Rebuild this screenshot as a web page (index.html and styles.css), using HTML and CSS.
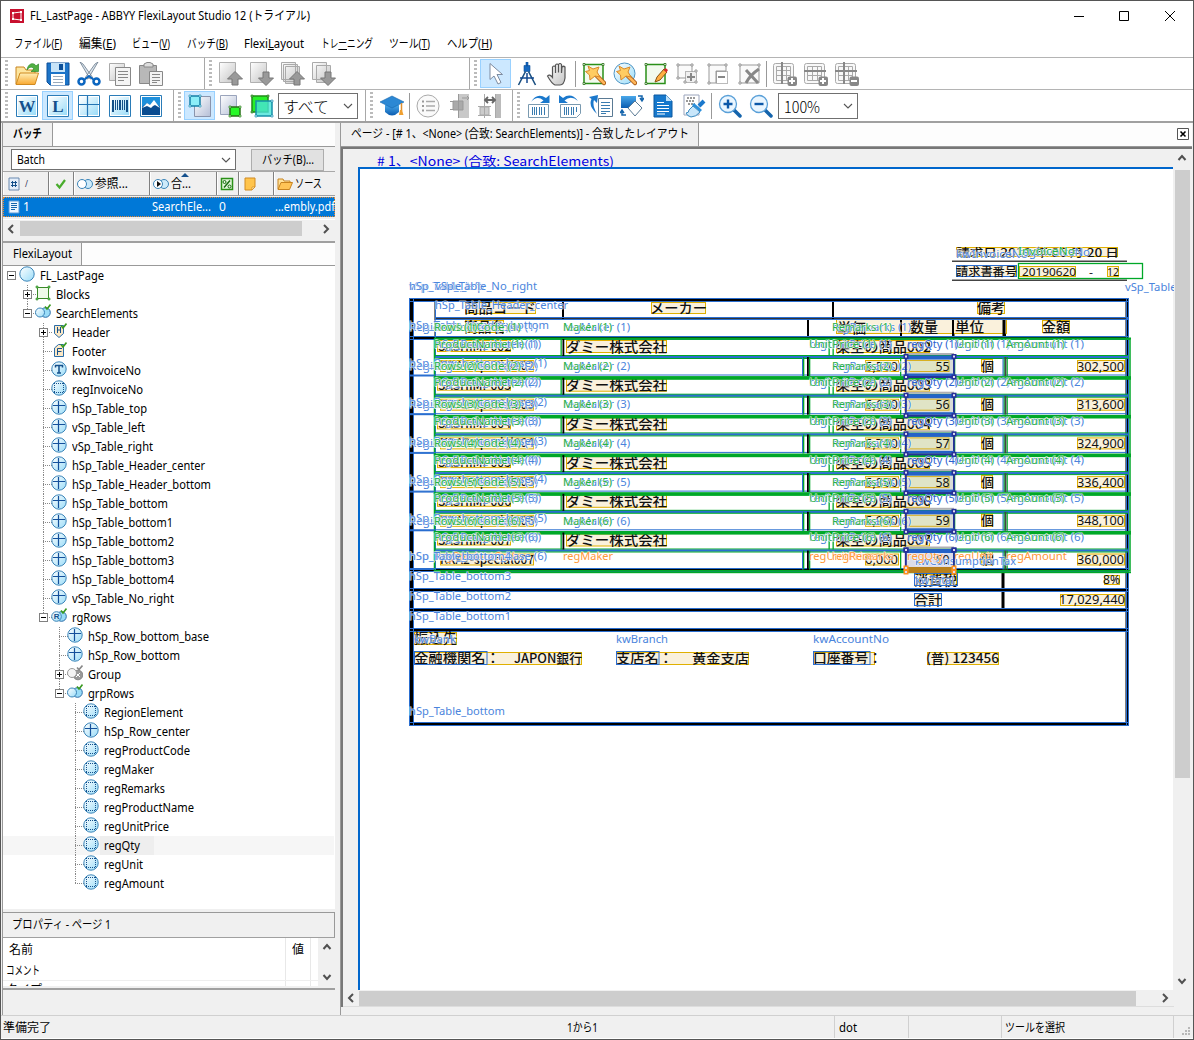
FILE: index.html
```html
<!DOCTYPE html>
<html lang="ja">
<head>
<meta charset="utf-8">
<title>FL_LastPage - ABBYY FlexiLayout Studio 12</title>
<link rel="stylesheet" href="styles.css">
</head>
<body>
<svg class="defs" width="0" height="0" aria-hidden="true">
  <defs>
    <linearGradient id="gBlue" x1="0" y1="0" x2="1" y2="1"><stop offset="0" stop-color="#fff"/><stop offset="1" stop-color="#9adcf8"/></linearGradient>
    <linearGradient id="gGray" x1="0" y1="0" x2="1" y2="1"><stop offset="0" stop-color="#fff"/><stop offset="1" stop-color="#c4c4c4"/></linearGradient>
    <linearGradient id="gSlate" x1="0" y1="0" x2="1" y2="1"><stop offset="0" stop-color="#fff"/><stop offset="1" stop-color="#b4bed6"/></linearGradient>
    <linearGradient id="gFold" x1="0" y1="0" x2="0" y2="1"><stop offset="0" stop-color="#fff0b8"/><stop offset="1" stop-color="#f8a830"/></linearGradient>
    <linearGradient id="gDeep" x1="0" y1="0" x2="0" y2="1"><stop offset="0" stop-color="#4aa8ea"/><stop offset="1" stop-color="#0a5cb0"/></linearGradient>
    <symbol id="open" viewBox="0 0 24 24"><path d="M1 22V5h8l2 3h9v4" fill="#fde6a0" stroke="#c88420"/><path d="M1 22.500 5 11h18.500L20 22.500z" fill="url(#gFold)" stroke="#d08a20"/><path d="M12 8C13 1 19 0 21 4l2.500-2v7.500H16l3-2.500C17 4 14 5 12 8z" fill="#52b043" stroke="#2d8a28" stroke-width=".7"/></symbol>
    <symbol id="save" viewBox="0 0 24 24"><path d="M1 1h22v22H4l-3-3z" fill="#1c74c8" stroke="#0c4f98"/><path d="M5 1h14v9H5z" fill="#c8e4f8"/><path d="M13 2h4v6h-4z" fill="#0c4f98"/><path d="M5 12h14v11H5z" fill="#fff"/><path d="M7 14.500h10M7 17.500h10M7 20.500h10" stroke="#9ab"/></symbol>
    <symbol id="cut" viewBox="0 0 24 24"><path d="m3 0 3 2 10 14-3 1zM21 0l-3 2L8 16l3 1z" fill="#dce6ee" stroke="#68788a" stroke-width=".8"/><circle cx="4.500" cy="19.500" r="3" fill="none" stroke="#0c66c0" stroke-width="2.500"/><circle cx="19.500" cy="19.500" r="3" fill="none" stroke="#0c66c0" stroke-width="2.500"/><path d="m7 18 5-4 5 4" fill="none" stroke="#0c66c0" stroke-width="2"/></symbol>
    <symbol id="copy" viewBox="0 0 24 24"><path d="M1.500 1.500h15v17h-15z" fill="url(#gGray)" stroke="#aaa"/><path d="M7.500 5.500h15v18h-15z" fill="#f4f4f4" stroke="#888"/><path d="M10 9.500h10M10 12.500h10M10 15.500h10M10 18.500h6" stroke="#888"/></symbol>
    <symbol id="paste" viewBox="0 0 24 24"><path d="M.5 3.500h17v18H.5z" fill="#b8b8b8" stroke="#888"/><path d="M5 5V2l3-1.500h3L14 2v3z" fill="#ddd" stroke="#888"/><path d="M10.500 9.500h13v14h-13z" fill="#f4f4f4" stroke="#888"/><path d="M13 12.500h8M13 15.500h8M13 18.500h8M13 20.500h5" stroke="#888"/></symbol>
    <symbol id="pgup" viewBox="0 0 24 24"><path d="M.5.500h16v20H.5z" fill="url(#gGray)" stroke="#b0b0b0"/><path d="M16 9.500 23.500 17H19v6h-6v-6H8.500z" fill="#999" stroke="#777"/></symbol>
    <symbol id="pgdn" viewBox="0 0 24 24"><path d="M.5.500h16v20H.5z" fill="url(#gGray)" stroke="#b0b0b0"/><path d="M16 23.500 23.500 16H19v-6h-6v6H8.500z" fill="#999" stroke="#777"/></symbol>
    <symbol id="pgsup" viewBox="0 0 24 24"><path d="M.5.500h14v17H.5zM2.500 2.500h14v17h-14zM4.500 4.500h14v17h-14z" fill="url(#gGray)" stroke="#aaa"/><path d="M16 9.500 23.500 17H19v6h-6v-6H8.500z" fill="#999" stroke="#777"/></symbol>
    <symbol id="pgsdn" viewBox="0 0 24 24"><path d="M.5.500h14v17H.5zM4.500 3.500h14v17h-14z" fill="url(#gGray)" stroke="#aaa"/><path d="M16 23.500 23.500 16H19v-6h-6v6H8.500z" fill="#999" stroke="#777"/></symbol>
    <symbol id="arrow" viewBox="0 0 24 24"><path d="M6 1.500v16l4-3.500 4 8 3-1.500-4-8h5.500z" fill="#fff" stroke="#7d8ba0"/></symbol>
    <symbol id="compass" viewBox="0 0 24 24"><path d="M9 3.500h6v6H9zM11 0h2v4h-2z" fill="#1668c0" stroke="#0c4f98" stroke-width=".6"/><path d="M10.500 9.500 3.500 23M13.500 9.500l7 13.500" stroke="#1a4f80" stroke-width="1.600"/><path d="M5 16h14M12 11v10" fill="none" stroke="#144a90" stroke-width="1.500"/></symbol>
    <symbol id="hand" viewBox="0 0 24 24"><path d="M6.500 14V5q1.500-2 3 0v6-8q1.500-2 3 0v7.500-8q1.500-2 3 0V11l.5-6q1.500-1.500 3 0V16q-1 7-5 7h-5q-3-1-7.500-9 2-2.500 5 1.500z" fill="url(#gGray)" stroke="#555" stroke-width="1.200"/></symbol>
    <symbol id="wand" viewBox="0 0 24 24"><path d="m14 13 8 8" stroke="#a85c18" stroke-width="4.500" stroke-linecap="round"/><path d="m14 13 8 8" stroke="#ffb658" stroke-width="2.500" stroke-linecap="round"/><path d="m6 4 5 3 6-2-2 5 3 5-5-1-5 4-.5-5-4-3.500 4-1z" fill="#ffcc62" stroke="#d8882a"/></symbol>
    <symbol id="gframe" viewBox="0 0 24 24"><path d="M2 2.500h19v19H2z" fill="#f2faee" stroke="#2a9018" stroke-width="1.500"/><path d="M1 1.500h2v2H1zM20 1.500h2v2h-2zM1 20.500h2v2H1z" fill="#fff" stroke="#2a7018" stroke-width=".8"/></symbol>
    <symbol id="wandsq" viewBox="0 0 24 24"><use href="#gframe"/><use href="#wand"/></symbol>
    <symbol id="wandcir" viewBox="0 0 24 24"><circle cx="11.500" cy="11.500" r="10.500" fill="url(#gBlue)" stroke="#4c94c4"/><use href="#wand"/></symbol>
    <symbol id="pencil" viewBox="0 0 24 24"><use href="#gframe"/><path d="m11 20 2-5L20 7l3 3-7 8z" fill="#ffae42" stroke="#8a5210"/><path d="m19.500 8 2-2 2.500 2-1.500 2.500z" fill="#d42c2c"/></symbol>
    <symbol id="gray1" viewBox="0 0 24 24"><path d="M3 3h14v13H3z" fill="#fafafa" stroke="#999"/><path d="M10.500 9.500h11v11h-11z" fill="#f0f0f0" stroke="#777" stroke-dasharray="1 1"/><path d="M16 11v8M12 15h8" stroke="#888" stroke-width="2"/><path d="M2 2h2v2H2zM16 2h2v2h-2zM2 15h2v2H2zM20 8h2v2h-2zM20 19h2v2h-2zM9 19h2v2H9z" fill="#fff" stroke="#999"/></symbol>
    <symbol id="gray2" viewBox="0 0 24 24"><path d="M20 9V3H3v18h7V9z" fill="#fafafa" stroke="#999"/><path d="M10.500 9.500h11v12h-11z" fill="none" stroke="#777" stroke-dasharray="1 1"/><path d="M12 15h7" stroke="#888" stroke-width="2"/><path d="M2 2h2v2H2zM19 2h2v2h-2zM2 20h2v2H2z" fill="#fff" stroke="#999"/></symbol>
    <symbol id="gray3" viewBox="0 0 24 24"><path d="M3 3h19v18H3z" fill="#fafafa" stroke="#999"/><path d="m9 8 12 13M22 7Q13 13 9 21" stroke="#888" stroke-width="3" fill="none"/><path d="M2 2h2v2H2zM21 2h2v2h-2zM2 20h2v2H2z" fill="#fff" stroke="#999"/></symbol>
    <symbol id="grid" viewBox="0 0 24 24"><rect x=".5" y="1.500" width="20" height="20" rx="2" fill="#f8f8f8" stroke="#aaa"/><path d="M3.500 4.500h14v14h-14zM3.500 8.500h14M3.500 13.500h14M8.500 4v14M13.500 4v14" fill="none" stroke="#aaa"/></symbol>
    <symbol id="addcol" viewBox="0 0 24 24"><use href="#grid"/><path d="M9 0v22" stroke="#888" stroke-width="2"/><rect x="14.500" y="14.500" width="9.500" height="9.500" rx="2" fill="#888"/><path d="M19 16v6M16 19h6" stroke="#fff" stroke-width="2"/></symbol>
    <symbol id="addrow" viewBox="0 0 24 24"><use href="#grid"/><path d="M0 9h22" stroke="#888" stroke-width="2"/><rect x="14.500" y="14.500" width="9.500" height="9.500" rx="2" fill="#888"/><path d="M19 16v6M16 19h6" stroke="#fff" stroke-width="2"/></symbol>
    <symbol id="delcell" viewBox="0 0 24 24"><use href="#grid"/><path d="M0 9h22M9 0v22" stroke="#888" stroke-width="2"/><rect x="14.500" y="14.500" width="9.500" height="9.500" rx="2" fill="#888"/><path d="M16 19h6" stroke="#fff" stroke-width="2"/></symbol>
    <symbol id="box" viewBox="0 0 24 24"><path d="M1.500 1.500h21v21h-21z" fill="#fff" stroke="#2a7cb8"/><path d="M3 3h18v18H3z" fill="url(#gBlue)"/></symbol>
    <symbol id="wbox" viewBox="0 0 24 24"><use href="#box"/><text x="12" y="18" text-anchor="middle" class="glyph">W</text></symbol>
    <symbol id="lbox" viewBox="0 0 24 24"><use href="#box"/><text x="12" y="18" text-anchor="middle" class="glyph">L</text></symbol>
    <symbol id="cross" viewBox="0 0 24 24"><use href="#box"/><path d="M10.500 2v20M2 10.500h20" stroke="#2474b4" stroke-width="1.200"/></symbol>
    <symbol id="barcode" viewBox="0 0 24 24"><use href="#box"/><path d="M5 6v12M12 6v10M19 6v12" stroke="#145088" stroke-width="2"/><path d="M7.500 6v10M9.500 6v10M14.500 6v10M16.500 6v10" stroke="#145088"/></symbol>
    <symbol id="pic" viewBox="0 0 24 24"><path d="M1.500 1.500h21v21h-21z" fill="#fff" stroke="#2a7cb8"/><path d="M3 3h18v18H3z" fill="#1e90dc"/><path d="M3 21v-8l5-4 4 3 4-4 5 5v8z" fill="#0a4c90"/><path d="m3 14 5-5 3 2 4-5 6 8-5-3-2 1-2 2-4-2z" fill="#fff"/></symbol>
    <symbol id="pgblk" viewBox="0 0 24 24"><path d="M6.500 2.500h16v20h-16z" fill="url(#gSlate)" stroke="#8a94ac"/><path d="M2 2h10v10H2z" fill="#8ceef8" stroke="#1680a8" stroke-width="1.500"/><path d="M1 1h2v2H1zM11 1h2v2h-2zM1 11h2v2H1zM11 11h2v2h-2z" fill="#cff" stroke="#1680a8" stroke-width=".6"/></symbol>
    <symbol id="pggrn" viewBox="0 0 24 24"><path d="M1.500 1.500h16v19h-16z" fill="url(#gSlate)" stroke="#9aa4bc"/><path d="M11 13h10v9H11z" fill="#28f828" stroke="#2a7018" stroke-width="1.500"/><path d="M10 12h2v2h-2zM20 12h2v2h-2zM10 21h2v2h-2zM20 21h2v2h-2z" fill="#afa" stroke="#2a7018" stroke-width=".6"/></symbol>
    <symbol id="twobox" viewBox="0 0 24 24"><path d="M2 2h16v16H2z" fill="#28f028" stroke="#228a18" stroke-width="1.500"/><path d="M6 7h16v15H6z" fill="#48e4d8" fill-opacity=".8" stroke="#1690a8" stroke-width="1.500"/><path d="M1 1h2v2H1zM17 1h2v2h-2zM1 17h2v2H1z" fill="#6c6" stroke="#2a7018" stroke-width=".6"/><path d="M21 6h2v2h-2zM5 21h2v2H5zM21 21h2v2h-2z" fill="#cff" stroke="#1680a8" stroke-width=".6"/></symbol>
    <symbol id="cap" viewBox="0 0 24 24"><path d="M5 11v7q7 7 14 0v-7z" fill="url(#gDeep)"/><path d="m0 8 12-6 12 6-12 6z" fill="#2c88d4" stroke="#1464ac" stroke-width=".6"/><path d="M21.500 9v8" stroke="#e09030" stroke-width="1.500"/><path d="m20 16-1 5h4.500l-1.500-5z" fill="#f0a030"/></symbol>
    <symbol id="list" viewBox="0 0 24 24"><circle cx="12" cy="12" r="11" fill="#fafafa" stroke="#aaa"/><path d="M10 7.500h9M10 12h9M10 16.500h9" stroke="#aaa" stroke-width="1.500"/><path d="M6 6.500h2v2H6zM6 11h2v2H6zM6 15.500h2v2H6z" fill="#999"/></symbol>
    <symbol id="al1" viewBox="0 0 24 24"><path d="M12 0h10v24H12z" fill="#c8c8c8"/><path d="M6 7h10v9H6z" fill="#aaa" stroke="#999"/><path d="M3 7.500h4M3 15.500h4M11.500 0v24M15 4h7M20 2l2 2-2 2" fill="none" stroke="#999"/></symbol>
    <symbol id="al2" viewBox="0 0 24 24"><path d="M18 0h5v24h-5z" fill="#bbb"/><path d="M2 13h9v8H2z" fill="#ccc" stroke="#aaa"/><path d="M0 12.500h13M0 21.500h13M6.500 0v24M17.500 0v24" stroke="#aaa"/><path d="M7 6h9M10 3 7 6l3 3M14 3l3 3-3 3" fill="none" stroke="#666" stroke-width="1.800"/></symbol>
    <symbol id="rotr" viewBox="0 0 24 24"><path d="M1.500 10.500h20v13h-20z" fill="#fff" stroke="#7a9ab0"/><path d="M5.500 13v8M7.500 13v8M9.500 13v8M12.500 13v8M14.500 13v8M17.500 13v8" stroke="#3a7cb0"/><path d="M4 8Q10-2 19 4l3.500-3V9H13l3.500-2.500Q10 1 4 8z" fill="#1a78cc"/></symbol>
    <symbol id="rotl" viewBox="0 0 24 24"><path d="M2.500 10.500h20v9l-4 4h-16z" fill="#fff" stroke="#7a9ab0"/><path d="M6.500 13v8M8.500 13v8M10.500 13v8M13.500 13v8M15.500 13v8M18.500 13v5" stroke="#3a7cb0"/><path d="M20 7Q13-2 5 4L1 1v8h9L6.500 6.500Q13 1 20 7z" fill="#1a78cc"/></symbol>
    <symbol id="rotpage" viewBox="0 0 24 24"><path d="M9.500 4.500h14v18h-14z" fill="#fff" stroke="#5a7a94"/><path d="M12 8.500h9M12 11.500h9M12 14.500h9M12 17.500h9M12 19.500h5" stroke="#3a7cb0"/><path d="M8 20Q-1 12 2.500 5L0 3l9-2-1 8-3-3q-2 5 3 14z" fill="#1a78cc"/></symbol>
    <symbol id="rotblk" viewBox="0 0 24 24"><path d="M1 2h15v12H1z" fill="url(#gDeep)"/><path d="m15 7 7 7-7 8-7-8z" fill="#fff" stroke="#5a7a94"/><path d="M18 2h4v4M20 4l2 3 2-3M6 21H2v-4M0 19l2-3 2 3" fill="none" stroke="#1464ac" stroke-width="1.500"/></symbol>
    <symbol id="doc" viewBox="0 0 24 24"><path d="M3 1h12l6 6v16H3z" fill="#1678cc" stroke="#0c58a0"/><path d="M15 1v6h6z" fill="#bfe2fa"/><path d="M6 8.500h7M6 11.500h12M6 14.500h12M6 17.500h12M6 20h8" stroke="#fff" stroke-width="1.200"/></symbol>
    <symbol id="brush" viewBox="0 0 24 24"><path d="M2 1h15v20H2z" fill="#fff" stroke="#9aa4bc"/><path d="M5 4h9M4 7h9M6 10h7" stroke="#333" stroke-dasharray="2 1"/><path d="m22 7-5 5" stroke="#1a78cc" stroke-width="4"/><path d="m12 9 8 7-2 2-8-7z" fill="#2c90dc"/><path d="m11 12 7 6q-4 5-9 5-4-1-5-4 3 0 3-3z" fill="#c8e6fa" stroke="#3a8ac0"/></symbol>
    <symbol id="zin" viewBox="0 0 24 24"><path d="m16 16 6 6" stroke="#1464ac" stroke-width="3.500" stroke-linecap="round"/><circle cx="10" cy="10" r="8.500" fill="#eaf6ff" stroke="#5aa0d8" stroke-width="1.300"/><path d="M10 5.500v9M5.500 10h9" stroke="#0c58a8" stroke-width="2.400"/></symbol>
    <symbol id="zout" viewBox="0 0 24 24"><path d="m16 16 6 6" stroke="#1464ac" stroke-width="3.500" stroke-linecap="round"/><circle cx="10" cy="10" r="8.500" fill="#eaf6ff" stroke="#5aa0d8" stroke-width="1.300"/><path d="M5.500 10h9" stroke="#0c58a8" stroke-width="2.400"/></symbol>

    <symbol id="t-root" viewBox="0 0 16 16"><circle cx="8" cy="8" r="7.200" fill="url(#gBlue)" stroke="#3a84b8"/></symbol>
    <symbol id="t-blocks" viewBox="0 0 16 16"><path d="M2.500 2.500h11v11h-11z" fill="#eefae8" stroke="#3a8a28"/><path d="M1 1h2v2H1zM13 1h2v2h-2zM1 13h2v2H1zM13 13h2v2h-2z" fill="#6c6" stroke="#3a8a28" stroke-width=".6"/></symbol>
    <symbol id="t-check" viewBox="0 0 16 16"><path d="m10 2.500 2 2.500 3.500-4.500" fill="none" stroke="#3a9a20" stroke-width="1.600"/></symbol>
    <symbol id="t-group" viewBox="0 0 16 16"><circle cx="10.500" cy="8.500" r="4.800" fill="#9adcf8" stroke="#2a6ca8"/><circle cx="5" cy="8.500" r="4.500" fill="url(#gBlue)" stroke="#3a84b8"/><use href="#t-check"/></symbol>
    <symbol id="t-goff" viewBox="0 0 16 16"><circle cx="11" cy="10" r="4.800" fill="#999" stroke="#888"/><path d="m9 8 4 4m0-4-4 4" stroke="#fff"/><circle cx="5" cy="8" r="4.500" fill="#f4f4f4" stroke="#999"/><path d="m10 2.500 2 2 3.500-4" fill="none" stroke="#888" stroke-width="1.600"/></symbol>
    <symbol id="t-rep" viewBox="0 0 16 16"><circle cx="10.500" cy="8.500" r="4.800" fill="#9adcf8" stroke="#2a6ca8"/><circle cx="5.500" cy="8.500" r="4.800" fill="url(#gBlue)" stroke="#3a84b8"/><text x="5.700" y="11.300" text-anchor="middle" class="tiny">R</text><use href="#t-check"/></symbol>
    <symbol id="t-head" viewBox="0 0 16 16"><path d="M3.500 2.500h9v8l-4.500 4-4.500-4z" fill="#fde8c4" stroke="#2a6ca8"/><path d="M6.500 4v6M9.500 4v6M6.500 7h3" stroke="#14508c"/><use href="#t-check"/></symbol>
    <symbol id="t-foot" viewBox="0 0 16 16"><path d="M3.500 14.500V6l4-3.500h5v12z" fill="#fde8c4" stroke="#2a6ca8"/><path d="M6.500 13V6.500h4.500M6.500 9.500h4" fill="none" stroke="#14508c"/><use href="#t-check"/></symbol>
    <symbol id="t-text" viewBox="0 0 16 16"><use href="#t-root"/><path d="M4.500 6.500v-2h7v2M8 4.500v7.500M6 12h4" fill="none" stroke="#14508c" stroke-width="1.500"/></symbol>
    <symbol id="t-region" viewBox="0 0 16 16"><use href="#t-root"/><path d="M3 3.500h10M3 12.500h10M3.500 3v10M12.500 3v10" fill="none" stroke="#14508c" stroke-dasharray="1 1"/></symbol>
    <symbol id="t-sep" viewBox="0 0 16 16"><use href="#t-root"/><path d="M7.500 2v12M2 6.500h12" stroke="#14509c" stroke-width="1.200"/></symbol>
  </defs>
</svg>

<div class="window">
  <header class="titlebar">
    <svg class="logo" viewBox="0 0 14 14"><path d="M0 0h14v14H0z" fill="#c8102e"/><path d="m3 4 8-1 0 8-8-1z" fill="none" stroke="#fff"/><path d="M2 3h2v2H2zM10 2h2v2h-2zM10 10h2v2h-2zM2 9h2v2H2z" fill="#fff"/></svg>
    <span class="fit" data-w="280">FL_LastPage - ABBYY FlexiLayout Studio 12 (トライアル)</span>
    <svg class="winctl" viewBox="0 0 110 14"><path d="M2 7.500h10M47.500 2.500h9v9h-9zM93 2l10 10m0-10-10 10" fill="none" stroke="#000"/></svg>
  </header>
  <nav class="menu">
    <span class="fit" data-w="48">ファイル(<u>F</u>)</span>
    <span class="fit" data-w="37">編集(<u>E</u>)</span>
    <span class="fit" data-w="38">ビュー(<u>V</u>)</span>
    <span class="fit" data-w="41">バッチ(<u>B</u>)</span>
    <span class="fit" data-w="60">Flexi<u>L</u>ayout</span>
    <span class="fit" data-w="52">トレ<u>ー</u>ニング</span>
    <span class="fit" data-w="41">ツール(<u>T</u>)</span>
    <span class="fit" data-w="45">ヘルプ(<u>H</u>)</span>
  </nav>
  <div class="toolbar">
    <div class="group g204"><i class="grip"></i><b class="btn"><svg><use href="#open"/></svg></b><b class="btn"><svg><use href="#save"/></svg></b><b class="btn"><svg><use href="#cut"/></svg></b><b class="btn"><svg><use href="#copy"/></svg></b><b class="btn"><svg><use href="#paste"/></svg></b></div>
    <div class="group g265"><i class="grip"></i><b class="btn"><svg><use href="#pgup"/></svg></b><b class="btn"><svg><use href="#pgdn"/></svg></b><b class="btn"><svg><use href="#pgsup"/></svg></b><b class="btn"><svg><use href="#pgsdn"/></svg></b></div>
    <div class="group last"><i class="grip"></i><b class="btn on"><svg><use href="#arrow"/></svg></b><b class="btn"><svg><use href="#compass"/></svg></b><b class="btn"><svg><use href="#hand"/></svg></b><i class="sep"></i><b class="btn"><svg><use href="#wandsq"/></svg></b><b class="btn"><svg><use href="#wandcir"/></svg></b><b class="btn"><svg><use href="#pencil"/></svg></b><b class="btn"><svg><use href="#gray1"/></svg></b><b class="btn"><svg><use href="#gray2"/></svg></b><b class="btn"><svg><use href="#gray3"/></svg></b><i class="sep"></i><b class="btn"><svg><use href="#addcol"/></svg></b><b class="btn"><svg><use href="#addrow"/></svg></b><b class="btn"><svg><use href="#delcell"/></svg></b></div>
  </div>
  <div class="toolbar">
    <div class="group g173"><i class="grip"></i><b class="btn"><svg><use href="#wbox"/></svg></b><b class="btn on"><svg><use href="#lbox"/></svg></b><b class="btn"><svg><use href="#cross"/></svg></b><b class="btn"><svg><use href="#barcode"/></svg></b><b class="btn"><svg><use href="#pic"/></svg></b></div>
    <div class="group g192"><i class="grip"></i><b class="btn on"><svg><use href="#pgblk"/></svg></b><b class="btn"><svg><use href="#pggrn"/></svg></b><b class="btn"><svg><use href="#twobox"/></svg></b><div class="combo big"><span class="fit" data-w="46">すべて</span><svg class="chev" viewBox="0 0 10 6"><path d="m1 1 4 4 4-4"/></svg></div></div>
    <div class="group g147"><i class="grip"></i><b class="btn"><svg><use href="#cap"/></svg></b><i class="sep"></i><b class="btn"><svg><use href="#list"/></svg></b><b class="btn"><svg><use href="#al1"/></svg></b><b class="btn"><svg><use href="#al2"/></svg></b></div>
    <div class="group last"><i class="grip"></i><b class="btn"><svg><use href="#rotr"/></svg></b><b class="btn"><svg><use href="#rotl"/></svg></b><b class="btn"><svg><use href="#rotpage"/></svg></b><b class="btn"><svg><use href="#rotblk"/></svg></b><b class="btn"><svg><use href="#doc"/></svg></b><b class="btn"><svg><use href="#brush"/></svg></b><i class="sep"></i><b class="btn"><svg><use href="#zin"/></svg></b><b class="btn"><svg><use href="#zout"/></svg></b><div class="combo big"><span class="fit" data-w="36">100%</span><svg class="chev" viewBox="0 0 10 6"><path d="m1 1 4 4 4-4"/></svg></div></div>
  </div>

  <main class="work">
    <aside class="left">
      <section class="batch">
        <div class="tabs"><div class="tab bold"><span class="fit" data-w="29">バッチ</span></div></div>
        <div class="pick">
          <div class="combo"><span class="fit" data-w="28">Batch</span><svg class="chev" viewBox="0 0 10 6"><path d="m1 1 4 4 4-4"/></svg></div>
          <div class="button"><span class="fit" data-w="52">バッチ(B)...</span></div>
        </div>
        <div class="cols">
          <div class="c c1"><svg class="ic" viewBox="0 0 12 14"><path d="M1 1h10v12H1z" fill="#e4eefa" stroke="#6a8ab0"/><path d="M4.500 4v6M7.500 4v6M3 5.500h6M3 8.500h6" stroke="#14508c"/></svg><span class="slash">/</span></div>
          <div class="c c2"><svg class="ic" viewBox="0 0 12 12"><path d="m1.500 6 3 3.500L10 2" fill="none" stroke="#48ac2c" stroke-width="2.200"/></svg></div>
          <div class="c c3"><svg class="ic w16" viewBox="0 0 16 12"><circle cx="11" cy="6" r="4.500" fill="#cdeafa" stroke="#3a84b8"/><circle cx="5" cy="6" r="4.500" fill="#fff" stroke="#3a84b8"/></svg><span class="fit" data-w="33">参照...</span></div>
          <div class="c c4"><svg class="ic w16" viewBox="0 0 16 12"><circle cx="11" cy="6" r="4.500" fill="#cdeafa" stroke="#3a84b8"/><circle cx="5" cy="6" r="4.500" fill="#fff" stroke="#3a84b8"/><path d="m4 3 4 3-4 3z" fill="#111"/></svg><span class="fit" data-w="20">合...</span><i class="up"></i></div>
          <div class="c c5"><svg class="ic w14" viewBox="0 0 14 14"><path d="M1.500 1.500h11v11h-11z" fill="#e4f8dc" stroke="#2a9018" stroke-width="1.500"/><path d="M4 10.500 10 3.500" stroke="#176a10" stroke-width="1.500"/><circle cx="4.500" cy="5" r="1.500" fill="none" stroke="#176a10"/><circle cx="9.500" cy="9.500" r="1.500" fill="none" stroke="#176a10"/></svg></div>
          <div class="c c6"><svg class="ic" viewBox="0 0 12 14"><path d="M1 1h10v9l-3 3H1z" fill="#ffc44c" stroke="#d08a20"/><path d="M8 13v-3h3z" fill="#fff0c0" stroke="#d08a20" stroke-width=".7"/></svg></div>
          <div class="c c7"><svg class="ic w16" viewBox="0 0 16 14"><path d="M1 12V2h5l1 2h6v2" fill="#ffe29a" stroke="#c88420"/><path d="m1 12.500 3-7h11.500l-3 7z" fill="#ffc456" stroke="#c88420"/></svg><span class="fit" data-w="27">ソース</span></div>
        </div>
        <div class="row">
          <svg class="ic" viewBox="0 0 12 14"><path d="M1 1h10v12H1z" fill="#eef6ff" stroke="#5a9ad8"/><path d="M3 3.500h6M3 5.500h6M3 7.500h6M3 9.500h4" stroke="#1464ac"/></svg>
          <span class="r1">1</span><span class="r2"><span class="fit" data-w="59">SearchEle...</span></span><span class="r3">0</span><span class="r4"><span class="fit" data-w="60">...embly.pdf</span></span>
        </div>
        <div class="hscroll small"><svg class="ar" viewBox="0 0 8 10"><path d="M6 1 2 5l4 4"/></svg><i class="thumb t282"></i><svg class="ar end" viewBox="0 0 8 10"><path d="m2 1 4 4-4 4"/></svg></div>
      </section>
      <section class="flexi">
        <div class="tabs"><div class="tab"><span class="fit" data-w="59">FlexiLayout</span></div></div>
        <div class="tree" id="tree"></div>
      </section>
      <section class="props">
        <div class="ptitle"><span class="fit" data-w="99">プロパティ - ページ 1</span></div>
        <div class="ptable">
          <div class="pgrid">
            <div class="phead"><span class="pn"><span class="fit" data-w="24">名前</span></span><span class="pv"><span class="fit" data-w="12">値</span></span></div>
            <div class="prow"><span class="pn"><span class="fit" data-w="34">コメント</span></span><span class="pv"></span></div>
            <div class="prow cut"><span class="pn"><span class="fit" data-w="36">タイプ</span></span><span class="pv"></span></div>
          </div>
          <div class="pscroll"><svg class="chv" viewBox="0 0 10 8"><path d="m1.500 6 3.500-4 3.500 4"/></svg><svg class="chv" viewBox="0 0 10 8"><path d="m1.500 2 3.500 4 3.500-4"/></svg></div>
        </div>
      </section>
      <div class="foot"></div>
    </aside>

    <section class="right">
      <div class="tabs"><div class="tab wide"><span class="fit" data-w="338">ページ - [# 1、&lt;None&gt; (合致: SearchElements)] - 合致したレイアウト</span></div><svg class="close" viewBox="0 0 12 12"><path d="M.5.5h11v11H.5z" fill="#fff" stroke="#555"/><path d="m3.500 3.500 5 5m0-5-5 5" stroke="#000" stroke-width="1.600"/></svg></div>
      <div class="view">
        <div class="stage">
          <svg id="page" width="831" height="841" viewBox="343 149 831 841"></svg>
          <div class="vscroll"><svg class="chv" viewBox="0 0 10 8"><path d="m1.500 6 3.500-4 3.500 4"/></svg><i class="vthumb"></i><svg class="chv" viewBox="0 0 10 8"><path d="m1.500 2 3.500 4 3.500-4"/></svg></div>
        </div>
        <div class="hscroll"><svg class="ar" viewBox="0 0 8 10"><path d="M6 1 2 5l4 4"/></svg><i class="thumb t777"></i><svg class="ar end" viewBox="0 0 8 10"><path d="m2 1 4 4-4 4"/></svg></div>
      </div>
    </section>
  </main>

  <footer class="status">
    <span class="s0"><span class="fit" data-w="48">準備完了</span></span>
    <span class="s1"><span class="fit" data-w="31">1から1</span></span>
    <span class="s2"><span class="fit" data-w="18">dot</span></span>
    <span class="s3"></span>
    <span class="s4"><span class="fit" data-w="60">ツールを選択</span></span>
    <svg class="size" viewBox="0 0 10 10"><path d="M7 1h2v2H7zM4 4h2v2H4zM7 4h2v2H7zM1 7h2v2H1zM4 7h2v2H4zM7 7h2v2H7z" fill="#b8b8b8"/></svg>
  </footer>
</div>
<script src="app.js"></script>
</body>
</html>
```
FILE: styles.css
```css
* { box-sizing: border-box; }
body { margin: 0; font: 12px/16px "Noto Sans", "Noto Sans CJK JP", sans-serif; color: #000; background: #fff; overflow: hidden; }
.defs { position: absolute; }
i, b { font-style: normal; font-weight: normal; }
svg { display: block; flex: none; }
.fit { display: inline-block; white-space: nowrap; transform-origin: 0 50%; }
.glyph { font: bold 17px "Liberation Serif", serif; fill: #14508c; }
.tiny { font: bold 8px "Liberation Sans", sans-serif; fill: #14508c; }

.window { width: 1194px; height: 1040px; display: flex; flex-direction: column; border: 1px solid #555; background: #fff; }
.titlebar { height: 30px; display: flex; align-items: center; padding-left: 9px; }
.logo { width: 14px; height: 14px; margin-right: 6px; }
.winctl { width: 110px; height: 14px; margin-left: auto; margin-right: 11px; }
.menu { height: 26px; display: flex; align-items: center; gap: 16.500px; padding-left: 13px; }

.toolbar { height: 32px; display: flex; border-top: 1px solid #b4b4b4; }
.group { display: flex; align-items: center; padding-left: 4px; border-right: 1px solid #a8a8a8; }
.g204 { width: 204px; } .g265 { width: 265px; } .g173 { width: 173px; } .g192 { width: 192px; } .g147 { width: 147px; }
.last { border-right: 0; flex: 1; }
.grip { width: 3px; height: 28px; margin-right: 3px; background: repeating-linear-gradient(#bbb 0 2px, #fff 2px 4px); flex: none; }
.btn { width: 31px; height: 29px; padding: 0 3px 0 4px; display: flex; align-items: center; flex: none; }
.btn svg { width: 24px; height: 24px; }
.btn.on { background: #cce8ff; border: 1px solid #99d1ff; padding: 0 2px 0 3px; }
.sep { width: 1px; height: 26px; margin: 0 2px; background: #999; flex: none; }
.combo { display: flex; align-items: center; justify-content: space-between; background: #fff; border: 1px solid #707070; }
.combo.big { width: 80px; height: 26px; margin-left: 2px; padding: 0 4px 0 5px; font: 16px/20px "Noto Sans CJK JP", sans-serif; font-weight: 300; }
.g192 .combo.big { margin-left: 1px; padding-left: 4px; }
.chev { width: 10px; height: 6px; fill: none; stroke: #555; stroke-width: 1.100; }

.work { height: 894px; display: flex; background: #f0f0f0; border-top: 2px solid #a0a0a0; }
.left { width: 333px; margin-left: 1px; display: flex; flex-direction: column; border-left: 1px solid #999; }
.tabs { display: flex; background: #fdfdfd; height: 24px; border-bottom: 1px solid #999; }
.tab { background: #f0f0f0; border-right: 1px solid #999; display: flex; align-items: center; padding: 0 10px 1px; flex: none; }
.bold { font-weight: 700; width: 50px; }
.pick { height: 25px; display: flex; align-items: center; padding: 1px 0 0 8px; border-bottom: 1px solid #a8a8a8; }
.pick .combo { width: 225px; height: 21px; margin-right: 15px; padding: 0 4px 0 5px; }
.button { width: 73px; height: 22px; background: #e1e1e1; border: 1px solid #adadad; display: flex; align-items: center; justify-content: center; }
.cols { display: flex; height: 24px; background: #f0f0f0; border-bottom: 1px solid #a0a0a0; overflow: hidden; }
.c { display: flex; align-items: center; gap: 2px; padding-left: 2px; border-right: 1px solid #808080; border-left: 1px solid #fff; overflow: hidden; position: relative; flex: none; }
.c1 { width: 46px; padding-left: 4px; } .c2 { width: 25px; padding-left: 5px; } .c3 { width: 76px; } .c4 { width: 67px; }
.c5 { width: 22px; } .c6 { width: 35px; padding-left: 4px; } .c7 { width: 60px; border-right: 0; }
.ic { width: 12px; height: 14px; } .w16 { width: 16px; } .w14 { width: 14px; }
.slash { font-size: 8px; margin-left: 3px; color: #335; }
.up { position: absolute; left: 30px; top: 1px; border: 4px solid transparent; border-top: 0; border-bottom-color: #14508c; }
.row { height: 20px; margin-top: 1px; display: flex; align-items: center; background: #0078d7; color: #fff; outline: 1px dotted #e88830; outline-offset: -1px; padding-left: 5px; overflow: hidden; }
.r1 { width: 127px; padding-left: 3px; } .r2 { width: 67px; margin-left: 5px; } .r3 { width: 56px; } .r4 { width: 60px; flex: none; }
.hscroll { display: flex; align-items: center; height: 17px; background: #f0f0f0; }
.small { margin-top: 2px; height: 18px; border-top: 1px solid #fff; }
.ar { width: 8px; height: 10px; margin: 0 4px; fill: none; stroke: #505050; stroke-width: 2; }
.ar.end { margin-left: auto; margin-right: 5px; }
.thumb { height: 15px; background: #cdcdcd; }
.t282 { width: 282px; margin-left: 1px; } .t777 { width: 777px; }

.flexi { margin-top: 4px; border-top: 2px solid #a0a0a0; }
.flexi .tab { width: 79px; padding-bottom: 0; }
.flexi .tabs { height: 23px; }
.tree { height: 643px; background: #fff; }
.node { height: 19px; display: flex; align-items: center; }
.node.sel { background: linear-gradient(90deg, #f6f6f6 97px, #eee 97px 151px, #f6f6f6 151px); margin-right: 1px; }
.guide { width: 13px; height: 19px; flex: none; display: flex; align-items: center; background: repeating-linear-gradient(#888 0 1px, transparent 1px 2px) 4px 0 / 1px 100% no-repeat, repeating-linear-gradient(90deg, #888 0 1px, transparent 1px 2px) 4px 9px / 9px 1px no-repeat; }
.guide.end { background-size: 1px 10px, 9px 1px; }
.guide.root { background: none; }
.exp { width: 9px; height: 9px; background: #fff; border: 1px solid #808080; }
.exp path { stroke: #000; }
.node .ti { width: 16px; height: 16px; margin: 0 5px 3px -1px; }

.props { margin-top: 3px; border-top: 1px solid #999; height: 74px; }
.ptitle { height: 25px; padding: 4px 9px; border-right: 1px solid #999; border-bottom: 1px solid #a0a0a0; }
.ptable { height: 48px; display: flex; background: #fff; overflow: hidden; }
.pgrid { flex: 1; }
.phead, .prow { display: flex; height: 24px; align-items: center; }
.prow { height: 19px; border-bottom: 1px solid #eee; }
.pn { width: 283px; padding-left: 6px; border-right: 1px solid #e8e8e8; height: 100%; display: flex; align-items: center; }
.prow .pn { padding-left: 3px; }
.pv { width: 25px; padding-left: 6px; border-right: 1px solid #e8e8e8; height: 100%; display: flex; align-items: center; }
.pscroll { width: 17px; background: #f0f0f0; display: flex; flex-direction: column; justify-content: space-between; align-items: center; padding: 5px 0; }
.chv { width: 10px; height: 8px; fill: none; stroke: #505050; stroke-width: 2; }
.foot { margin-top: 2px; flex: 1; border-top: 2px solid #a0a0a0; border-bottom: 1px solid #f0f0f0; }

.right { width: 854px; margin-left: 5px; border-left: 1px solid #999; padding-right: 1px; }
.right .tabs { align-items: stretch; height: 24px; }
.wide { width: 358px; }
.close { width: 12px; height: 12px; margin: 5px 3px 0 auto; }
.view { border-left: 2px solid #777; border-top: 2px solid #777; }
.stage { display: flex; height: 841px; }
.vscroll { width: 16px; background: #f0f0f0; display: flex; flex-direction: column; align-items: center; padding: 5px 0; }
.vthumb { width: 15px; height: 608px; background: #cdcdcd; margin-top: 8px; margin-bottom: auto; }
.right .hscroll { width: 831px; border-bottom: 1px solid #ddd; }

.status { height: 23px; display: flex; align-items: center; background: #f0f0f0; border-top: 1px solid #d0d0d0; }
.status > span { height: 22px; display: flex; align-items: center; padding-top: 2px; }
.s0 { width: 566px; padding-left: 2px; } .s1 { width: 268px; border-right: 1px solid #d0d0d0; }
.s2 { width: 74px; padding-left: 4px; border-right: 1px solid #d0d0d0; } .s3 { width: 93px; border-right: 1px solid #d0d0d0; }
.s4 { width: 172px; padding-left: 3px; border-right: 1px solid #d0d0d0; }
.size { width: 10px; height: 10px; margin: 8px 2px 0 auto; }

.ink { fill: #111; font-family: "Noto Sans CJK JP", sans-serif; font-weight: 500; }
.num { fill: #111; font-family: "Noto Sans", sans-serif; }
.lab { font-family: "Noto Sans", sans-serif; font-size: 11.500px; paint-order: stroke; stroke: #fff; stroke-width: 1.200px; stroke-opacity: .75; }
.lb { fill: #4a84dc; } .lq { fill: #2c62d0; } .lg { fill: #28b048; } .lo { fill: #ff9838; }
.cap { fill: #0000e0; font: 400 12.500px "Noto Sans CJK JP", sans-serif; }
.word { fill: #faf1dc; stroke: #e0b000; }
```
FILE: app.js
```js
// Tree: [level, icon, label, label width, expander]
const nodes = [
  [0, 'root', 'FL_LastPage', 64, '-'], [1, 'blocks', 'Blocks', 34, '+'], [1, 'group', 'SearchElements', 82, '-'],
  [2, 'head', 'Header', 38, '+'], [2, 'foot', 'Footer', 34], [2, 'text', 'kwInvoiceNo', 69], [2, 'region', 'regInvoiceNo', 71],
  [2, 'sep', 'hSp_Table_top', 75], [2, 'sep', 'vSp_Table_left', 73], [2, 'sep', 'vSp_Table_right', 81],
  [2, 'sep', 'hSp_Table_Header_center', 133], [2, 'sep', 'hSp_Table_Header_bottom', 139], [2, 'sep', 'hSp_Table_bottom', 96],
  [2, 'sep', 'hSp_Table_bottom1', 101], [2, 'sep', 'hSp_Table_bottom2', 102], [2, 'sep', 'hSp_Table_bottom3', 102],
  [2, 'sep', 'hSp_Table_bottom4', 102], [2, 'sep', 'vSp_Table_No_right', 102], [2, 'rep', 'rgRows', 39, '-'],
  [3, 'sep', 'hSp_Row_bottom_base', 121], [3, 'sep', 'hSp_Row_bottom', 92], [3, 'goff', 'Group', 33, '+'], [3, 'group', 'grpRows', 46, '-'],
  [4, 'region', 'RegionElement', 79], [4, 'sep', 'hSp_Row_center', 86], [4, 'region', 'regProductCode', 86], [4, 'region', 'regMaker', 50],
  [4, 'region', 'regRemarks', 61], [4, 'region', 'regProductName', 90], [4, 'region', 'regUnitPrice', 65], [4, 'region', 'regQty', 36],
  [4, 'region', 'regUnit', 39], [4, 'region', 'regAmount', 60]
];
document.getElementById('tree').innerHTML = nodes.map(([lv, icon, text, w, ex], i) => {
  const next = nodes[i + 1];
  const end = text === 'SearchElements' || text === 'rgRows' || text === 'grpRows' || !next;
  const box = ex ? `<svg class="exp" viewBox="0 0 7 7"><path d="M1 3.500h5${ex === '+' ? 'M3.500 1v5' : ''}"/></svg>` : '';
  return `<div class="node${text === 'regQty' ? ' sel' : ''}" style="padding-left:${4 + 16 * lv}px"><span class="guide${lv ? '' : ' root'}${end ? ' end' : ''}">${box}</span><svg class="ti"><use href="#t-${icon}"/></svg><span class="fit" data-w="${w}">${text}</span></div>`;
}).join('');

// Condense or widen UI labels to their column width
document.querySelectorAll('.fit').forEach(el => {
  const w = +el.dataset.w, n = el.getBoundingClientRect().width;
  el.style.transform = `scaleX(${w / n})`;
  el.style.marginRight = `${w - n}px`;
});

// Page canvas
const out = [];
const GREEN = '#00a828', BLUE = '#2a6ed0';
const esc = s => s.replace(/</g, '&lt;');
const rect = (x1, y1, x2, y2, stroke, sw = 1, fill = 'none') => out.push(`<rect x="${x1}" y="${y1}" width="${x2 - x1}" height="${y2 - y1}" fill="${fill}" stroke="${stroke}" stroke-width="${sw}"/>`);
const bar = (x, y, w, h, c = '#000') => out.push(`<rect x="${x}" y="${y}" width="${w}" height="${h}" fill="${c}"/>`);
const text = (cls, x, y, w, s, size) => out.push(`<text class="${cls}" x="${x}" y="${y}" textLength="${w}" lengthAdjust="spacingAndGlyphs"${size ? ` style="font-size:${size}px"` : ''}>${esc(s)}</text>`);
const word = (x1, y1, x2, y2) => out.push(`<rect class="word" x="${x1 + .5}" y="${y1 + .5}" width="${x2 - x1 - 1}" height="${y2 - y1 - 1}"/>`);
const label = (k, x, yc, w, s) => text('lab l' + k, x, yc + 4, w, s);

bar(343, 149, 831, 841, '#f0f0f0');
text('cap', 377, 165.500, 237, '# 1、<None> (合致: SearchElements)');
bar(358, 167, 815, 823, '#0066cc');
bar(360, 169, 813, 821, '#fff');

// Invoice number block
word(956, 247, 1118, 257);
text('ink', 956, 257, 163, '請求日 2019 年 06 月 20 日', 11);
bar(952, 260.500, 175, 1.500, '#444');
word(956, 265, 1016, 277); rect(956.500, 265.500, 1016.500, 276.500, BLUE);
text('ink', 956, 275.500, 61, '請求書番号', 11.500);
word(1019, 266, 1076, 277); word(1107, 266, 1119, 277);
text('num', 1022, 275.500, 54, '20190620', 11.500); text('num', 1089, 275.500, 4, '-', 11); text('num', 1107, 275.500, 12, '12', 11.500);
bar(952, 279.500, 175, 1.500, '#444');
rect(1018.500, 263.500, 1142.500, 278.500, GREEN, 1.300);
label('b', 956, 254, 72, 'kwInvoiceNo'); label('b', 1018, 252, 72, 'regInvoiceNo'); label('g', 1018, 251, 57, 'InvoiceNo');
label('b', 1125, 287, 82, 'vSp_Table_right');

// Table frame
bar(410, 298, 3, 428); bar(1125.500, 298, 3, 428);
bar(409, 298, 719, 3); bar(435, 317.500, 692, 2.500, '#333'); bar(409, 336, 719, 3);
bar(434.500, 302, 1.500, 270); bar(562, 301, 2, 18); bar(832, 301, 2, 18);
bar(807, 319, 2, 18); bar(900, 319, 2, 18); bar(952.500, 319, 2, 18); bar(1003, 319, 3, 18);
bar(409, 569, 719, 3); bar(409, 589, 719, 2.500); bar(409, 608.500, 719, 2.500); bar(409, 629, 719, 2.500); bar(409, 723, 719, 3);
bar(1001.500, 572, 3, 37);
for (const [x1, y1, x2, y2, s, tx, w] of [
  [465, 302, 536, 314, '商品コード', 464, 72], [465, 320, 504, 333, '商品名', 464, 41], [651, 302, 706, 314, 'メーカー', 650, 57],
  [977, 301, 1005, 314, '備考', 977, 28], [836, 319, 1007, 334, '単価', 837, 29], [1042, 320, 1070, 333, '金額', 1042, 28]
]) { word(x1, y1, x2, y2); text('ink', tx, y2 - 1.500, w, s, 13.500); }
bar(900, 319, 2, 18); bar(952, 319, 2, 18); bar(1002.500, 319, 3, 18);
text('ink', 910, 331.500, 28, '数量', 13.500); text('ink', 955, 331.500, 29, '単位', 13.500);

const top0 = 339, pitch = 38.700;
const qty = [55, 56, 57, 58, 59, 60];
const sums = ['302,500', '313,600', '324,900', '336,400', '348,100', '360,000'];
const prices = ['5,500', '5,600', '5,700', '5,800', '5,900', '6,000'];
for (let i = 0; i < 6; i++) {
  const y = top0 + pitch * i, c = y + 7;
  word(437, c - 6, 511, c + 6); text('ink', 438, c + 5, 73, 'SASHIMI-00' + (i + 2), 12);
  word(566, c - 6, 667, c + 7); text('ink', 566, c + 5.500, 101, 'ダミー株式会社', 14);
  word(836, c - 6, 930, c + 7); text('ink', 836, c + 5.500, 95, '架空の商品00' + (i + 2), 13.500);
  word(440, y + 21, 534, y + 33); text('ink', 440, y + 31, 94, 'KRA2-special00' + (i + 2), 12);
  word(865, y + 21, 899, y + 33); text('num', 865, y + 31.500, 33, prices[i], 12);
  word(981, y + 20, 993, y + 33); text('ink', 981, y + 31.500, 13, '個', 13);
  word(1077, y + 21, 1125, y + 33); text('num', 1077, y + 31.500, 47, sums[i], 12.500);
  bar(904, y + 18, 51, 19, i < 5 ? '#d8dcd8' : '#dcdce8');
  if (i < 5) rect(905, y + 21.500, 949, y + 32.500, '#d8b020', 1, '#e0e4c6');
  text('num', 935.500, y + 31.500, 14, '' + qty[i], 12.500);
}

// Recognised separators
const sep = (x1, y1, x2, y2) => rect(x1, y1, x2, y2, BLUE);
sep(409.500, 298.500, 1128.500, 301.500); sep(435.500, 317.500, 1127.500, 319.500); sep(409.500, 336.500, 1128.500, 339.500);
sep(409.500, 298.500, 413.500, 725.500); sep(1126.500, 298.500, 1128.500, 725.500);
for (const y of [568.500, 588.500, 608.500, 628.500, 722.500]) sep(409.500, y, 1128.500, y + 3);
bar(435, 302, 1, 269, BLUE);

// Recognised rows
for (let i = 0; i < 6; i++) {
  const y = top0 + pitch * i, g = GREEN;
  bar(409, y + 36, 26, 1.500, BLUE);
  rect(434.500, y, 1130, y + 38.200, g, 1.500);
  bar(434, y - 1.500, 697, i ? 3.600 : 2, g);
  bar(434, y + 16, 694, 1.200, g); bar(436, y + 17, 692, 2.200, BLUE); bar(434, y + 19, 694, 1, g);
  bar(410, y + 35.500, 717, 1, BLUE);
  for (const x of [560.500, 828.500, 832.500]) bar(x, y, 1.300, 17, g);
  bar(562.500, y, 1.800, 17);
  for (const x of [803, 809, 900, 954, 1003.500, 1006.500]) bar(x, y + 18, 1.300, 19, g);
  bar(802, y + 18, 1, 19, BLUE); bar(807, y + 18, 1.800, 19);
  bar(1002.500, y + 18, 1, 19, BLUE); bar(1004.800, y + 18, 1.500, 19, '#444');
}
bar(434, 571.500, 697, 1.700, GREEN);

// Totals and bank block
word(914, 574, 957, 586); text('ink', 914, 585, 43, '消費税', 13.500);
word(914, 593, 942, 606); text('ink', 914, 604.500, 28, '合計', 13.500);
sep(914.500, 573.500, 957.500, 585.500); sep(914.500, 593.500, 941.500, 605.500);
word(1104, 575, 1120, 585); text('num', 1103, 584, 17, '8%', 12.500);
word(1060, 594, 1125, 606); text('num', 1059, 604, 66, '17,029,440', 12.500);
for (const [x1, x2, y, s, w, kw] of [[414, 457, 632, '振込先', 43], [414, 582, 652, '金融機関名：', 86, 487], [616, 749, 652, '支店名：', 57, 659], [813, 875, 652, '口座番号：', 69, 870]]) {
  word(x1, y, x2, y + 13); text('ink', x1, y + 10.500, w, s, 13.500);
  if (kw) sep(x1 + .5, y - .5, kw, y + 12.500);
}
text('ink', 514, 662.500, 68, 'JAPON銀行', 13); text('ink', 692, 662.500, 57, '黄金支店', 13);
word(927, 652, 999, 665); text('ink', 926, 662.500, 73, '(普) 123456', 13);

// Annotation labels
label('b', 409, 286, 73, 'vSp_Table_left'); label('b', 409, 286, 75, 'hSp_Table_top'); label('b', 435, 286, 102, 'vSp_Table_No_right');
label('b', 435, 305, 133, 'hSp_Table_Header_center');
for (let i = 0; i < 6; i++) {
  const u = 327 + pitch * i, l = 343.500 + pitch * i, n = ` (${i + 1})`;
  label('b', 409, u, 100, 'RegionElement' + n);
  label('o', 435, u, 86, 'regProductCode');
  label('b', 435, u, 103, 'regProductCode' + n); label('b', 563, u, 67, 'regMaker' + n); label('b', 832, u, 79, 'regRemarks' + n);
  label('b', 409, u - 2.500, i ? 138 : 140, i ? `hSp_Row_bottom_base (${i})` : 'hSp_Table_Header_bottom');
  label('g', 434, u, 87, 'ProductCode' + n); label('g', 434, u, 43, 'Rows' + n);
  label('g', 563, u, 49, 'Maker' + n); label('g', 832, u, 60, 'Remarks' + n);
  label('b', 435, l, 106, 'regProductName' + n); label('b', 435, l, 103, 'hSp_Row_center' + n);
  label('b', 809, l, 83, 'regUnitPrice' + n); label('b', 954, l, 56, 'regUnit' + n); label('b', 1006, l, 78, 'regAmount' + n);
  label('g', 434, l, 90, 'ProductName' + n); label('g', 809, l, 67, 'UnitPrice' + n); label('g', 956, l, 38, 'Unit' + n); label('g', 1006, l, 59, 'Amount' + n);
  label('q', 907, l, 51, 'regQty' + n);
}
const r = 556;
label('o', 435, r, 86, 'regProductCode'); label('o', 563, r, 50, 'regMaker'); label('o', 809, r, 65, 'regUnitPrice'); label('o', 832, r, 62, 'regRemarks');
label('b', 409, r, 138, 'hSp_Row_bottom_base (6)'); label('b', 409, r, 102, 'hSp_Table_bottom4');
label('o', 954, r, 39, 'regUnit'); label('o', 1006, r, 61, 'regAmount');
label('b', 915, 560.500, 101, 'kwConsumptionTax'); label('o', 907, r, 36, 'regQty');
label('b', 409, 576, 102, 'hSp_Table_bottom3'); label('b', 409, 596, 102, 'hSp_Table_bottom2'); label('b', 409, 616, 102, 'hSp_Table_bottom1');
label('b', 915, 580, 39, 'kwTotal'); label('b', 414, 639, 42, 'kwBank'); label('b', 616, 639, 52, 'kwBranch'); label('b', 813, 639, 76, 'kwAccountNo'); label('b', 409, 711, 96, 'hSp_Table_bottom');

// Selected quantity regions with resize handles
const handles = (x1, y1, x2, y2, c) => { for (const x of [x1, x2]) for (const y of [y1, y2]) { bar(x - 2.500, y - 2.500, 5, 5, c); bar(x - 1, y - 1, 2, 2, '#dde'); } };
for (let i = 0; i < 6; i++) {
  const y = top0 + pitch * i;
  bar(906, y + 14, 48, 2, '#b0b0b4'); bar(906, y + 16.500, 48, 4, '#2462c8');
  bar(905, y + 16, 1.800, 22, '#26309a'); bar(953, y + 16, 1.800, 22, '#26309a');
  if (i < 5) { bar(906, y + 34.500, 48, 2.500, '#2462c8'); bar(905, y + 37, 50, 2, '#26309a'); handles(906, y + 17.500, 954, y + 38, '#26309a'); }
  else { bar(905, 567, 50, 6, '#b8801c'); handles(906, y + 17.500, 954, y + 17.500, '#26309a'); handles(906, 568, 954, 572, '#ff9020'); }
}
document.getElementById('page').innerHTML = out.join('');
```
